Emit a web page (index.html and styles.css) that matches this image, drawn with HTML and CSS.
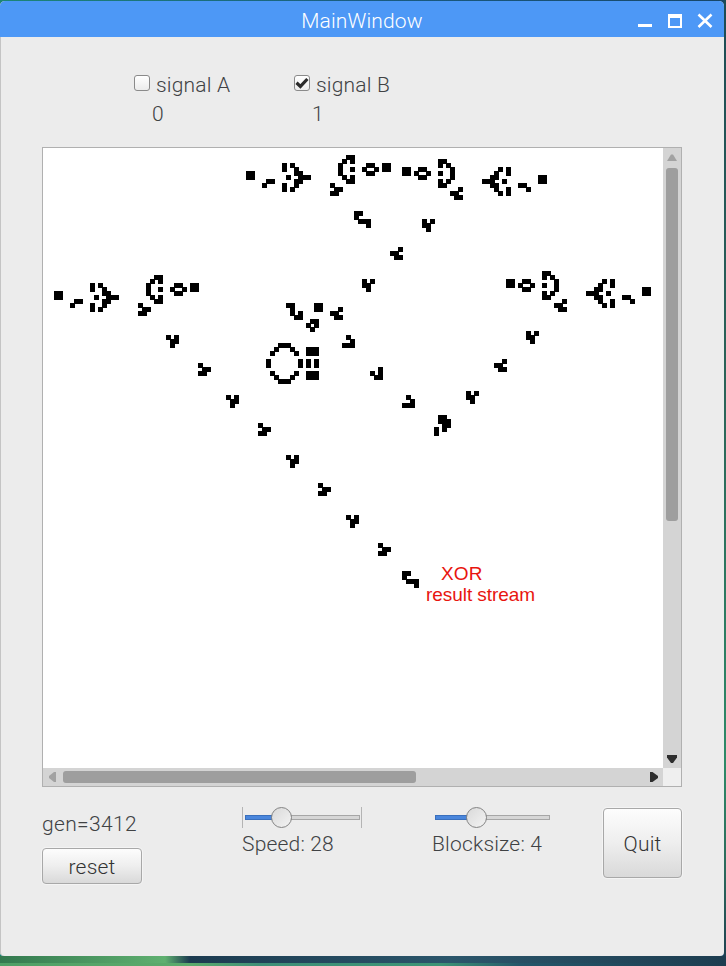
FILE: index.html
```html
<!DOCTYPE html>
<html lang="en">
<head>
<meta charset="utf-8">
<title>MainWindow</title>
<link rel="stylesheet" href="styles.css">
</head>
<body>
<main class="window">
  <header class="titlebar">
    <h1 class="title"><span class="t-title">MainWindow</span></h1>
    <div class="controls">
      <svg width="76" height="18" viewBox="0 0 76 18" fill="none" stroke="#fff">
        <path d="M0 14.500H14" stroke-width="3"/>
        <path d="M31 4V16H43V4" stroke-width="2"/>
        <path d="M30 5H44" stroke-width="4"/>
        <path d="M60.5 3.5L73.5 16M73.5 3.5L60.5 16" stroke-width="2.6"/>
      </svg>
    </div>
  </header>

  <section class="signals">
    <div class="signal">
      <label class="check"><span class="box"></span><span class="t-sig">signal A</span></label>
      <div class="value">0</div>
    </div>
    <div class="signal">
      <label class="check"><span class="box"><svg width="16" height="16" viewBox="0 0 16 16"><path d="M2.5 7.8L6.4 11.4L13.4 4" fill="none" stroke="#2b2b2b" stroke-width="3.2"/></svg></span><span class="t-sig">signal B</span></label>
      <div class="value">1</div>
    </div>
  </section>

  <section class="view">
    <div class="field">
      <svg id="cells" width="620" height="620" viewBox="1 1 620 620" shape-rendering="crispEdges"></svg>
      <div class="note"><span class="note-head">XOR</span><span>result stream</span></div>
    </div>
    <div class="vbar">
      <svg width="18" height="20" viewBox="0 0 18 20"><path d="M4 13L8 6.500H10L14 13Z" fill="#a2a2a2"/></svg>
      <div class="vthumb"></div>
      <svg class="end" width="18" height="18" viewBox="0 0 18 18"><path d="M4 5H14V7.500L10 13H8L4 7.500Z" fill="#2e2e2e"/></svg>
    </div>
    <div class="hbar">
      <svg width="20" height="18" viewBox="0 0 20 18"><path d="M13 4V14H11L6 10V8L11 4Z" fill="#a2a2a2"/></svg>
      <div class="hthumb"></div>
      <svg class="end" width="18" height="18" viewBox="0 0 18 18"><path d="M5 4H7.500L13 8V10L7.500 14H5Z" fill="#2e2e2e"/></svg>
    </div>
    <div class="corner"></div>
  </section>

  <footer class="panel">
    <div class="gen">
      <div class="t-line">gen=3412</div>
      <button class="btn reset">reset</button>
    </div>
    <div class="speed">
      <div class="slider ticks"><span class="fill"></span><span class="rail"></span><span class="knob"></span></div>
      <div class="t-line">Speed: 28</div>
    </div>
    <div class="size">
      <div class="slider"><span class="fill"></span><span class="rail"></span><span class="knob"></span></div>
      <div class="t-line">Blocksize: 4</div>
    </div>
    <button class="btn quit">Quit</button>
  </footer>
</main>
<script src="life.js"></script>
</body>
</html>
```

FILE: styles.css
```css
* { box-sizing: border-box; }

body {
  margin: 0;
  height: 966px;
  padding-top: 1px;
  overflow: hidden;
  font: 300 21px/28px Roboto, "Liberation Sans", sans-serif;
  letter-spacing: .18px;
  color: #404244;
  background:
    linear-gradient(90deg, #4f9f66 0, #5cab6c 190px, #3f8f78 260px, #3d9476 440px, #24566a 520px, #1d3d50 100%) 0 963px / 726px 3px no-repeat,
    linear-gradient(90deg, #33794f 0, #5fb070 165px, #1c3b50 190px, #2b566b 450px, #1d3d50 100%) 0 956px / 726px 10px no-repeat,
    linear-gradient(#1d4b55 0, #2b6358 40%, #2d8a68 79%, #2c6a5c 90%, #1d3d50 100%) 724px 0 / 2px 966px no-repeat,
    linear-gradient(90deg, #1c8576, #1a5c80 50%, #174668) #174668;
}

.window {
  width: 724px;
  height: 955px;
  background: #ececec;
  border-radius: 5px 5px 4px 4px;
  overflow: hidden;
  box-shadow: inset 1px 0 #c4c4c4;
}

.titlebar {
  height: 36px;
  display: grid;
  grid-template-columns: 1fr auto 1fr;
  align-items: center;
  background: #4d98f6;
}
.title {
  grid-column: 2;
  margin: 0;
  font-size: 21px;
  font-weight: 300;
  line-height: 36px;
  letter-spacing: .15px;
  color: #fff;
  padding-top: 2px;
}
.controls {
  justify-self: end;
  width: 86px;
  height: 18px;
}
.controls svg { display: block; }

.signals {
  height: 110px;
  padding: 33px 0 0 134px;
  display: flex;
}
.signal { width: 160px; }
.check { display: flex; gap: 6px; height: 29px; line-height: 30px; }
.box {
  width: 16px;
  height: 16px;
  margin-top: 5px;
  border: 1px solid #8a8a8a;
  border-radius: 3px;
  background: linear-gradient(#fff, #ececec);
}
.box svg { display: block; margin: -1px; }
.value { padding-left: 18px; line-height: 30px; }

.view {
  width: 640px;
  height: 640px;
  margin-left: 42px;
  border: 1px solid #b0b0b0;
  display: grid;
  grid-template: 620px 18px / 620px 18px;
}
.field { position: relative; background: #fff; }
.field svg, .vbar svg, .hbar svg { display: block; }
.note {
  position: absolute;
  left: 383px;
  top: 415px;
  display: flex;
  flex-direction: column;
  font: 400 19px/21px "Liberation Sans", sans-serif;
  letter-spacing: -.06px;
  color: #e8150f;
  white-space: nowrap;
}
.note-head { padding-left: 15px; letter-spacing: .2px; }
.vbar, .hbar { display: flex; background: #d4d4d4; }
.vbar { flex-direction: column; }
.vthumb { width: 12px; height: 353px; margin-left: 3px; border-radius: 3px; background: #9e9e9e; }
.hthumb { width: 353px; height: 12px; margin-top: 3px; border-radius: 3px; background: #9e9e9e; }
.vbar .end { margin-top: auto; }
.hbar .end { margin-left: auto; }
.corner { background: #efefef; }

.panel {
  margin: 20px 42px 0;
  display: grid;
  grid-template-columns: 200px 190px 171px 79px;
  align-items: start;
}
.gen { padding-top: 3px; }
.gen .t-line { height: 38px; letter-spacing: .35px; }
.t-line { white-space: nowrap; }
.btn {
  font: inherit;
  letter-spacing: .18px;
  color: #333;
  padding: 2px 0 0;
  border: 1px solid #a8a8a8;
  border-radius: 4px;
  background: linear-gradient(#fdfdfd, #eee 50%, #d9d9d9);
  box-shadow: 0 0 0 1px #f4f4f4;
}
.reset { display: block; width: 100px; height: 36px; }
.quit { width: 79px; height: 70px; margin-top: 1px; }

.slider {
  position: relative;
  width: 120px;
  height: 21px;
  margin-bottom: 2px;
  padding: 0 2px 0 3px;
  display: flex;
  align-items: center;
}
.ticks { border: solid #b4b4b4; border-width: 0 1px; padding: 0 1px 0 2px; }
.fill { width: 38px; height: 5px; background: #4a86dc; border: 1px solid #3a6fbc; }
.rail { flex: 1; height: 5px; background: #d6d6d6; border: 1px solid #a6a6a6; }
.knob {
  position: absolute;
  left: 28px;
  top: 0;
  width: 21px;
  height: 21px;
  border: 1px solid #838383;
  border-radius: 50%;
  background: linear-gradient(135deg, #d9d9d9, #f3f3f3);
}
.size .knob { left: 34px; }
```

FILE: life.js
```js
// Live patterns of the automaton; '#' is a live cell.
const shapes = {
  block: ["##", "##"],
  pairR: [".##", "#.."],
  pairL: ["##.", "..#"],
  arrowR: ["#.#....", "#..#...", "...##..", ".#..###", "...##..", "#..#...", "#.#...."],
  arrowL: ["....#.#", "...#..#", "..##...", "###..#.", "..##...", "...#..#", "....#.#"],
  bowC: ["..##", ".#.#", "#...", "#..#", "#...", ".#.#", "..##"],
  bowD: ["##..", "#.#.", "...#", "#..#", "...#", "#.#.", "##.."],
  hive: [".##.", "#..#", ".##."],
  gliderR: ["#..", ".##", "##."],
  gliderL: ["..#", "##.", ".##"],
  gliderV: ["#.#", ".##", ".#."],
  gliderW: ["#.#", "##.", ".#."],
  gliderB: [".#.", "..#", "###"],
  gliderJ: ["..#", "#.#", ".##"],
  eater: ["##..", "#...", ".###", "...#"],
  hook: ["##..", ".#..", ".#.#", "..##"],
  boat: [".##", "#.#", ".#."],
  ring: ["...###", "..#...#", ".#.....#", "", "#.......#", "#.......#", "", ".#.....#", "..#...#", "...###"],
  stack: ["###", "###", "", "#.#", "#.#", "", "###", "###"],
  blob: [".##.", ".###", "..##", "#.#.", "#..."]
};

// [shape, column, row]
const placed = [
  ["block", 51, 6], ["pairR", 55, 8], ["arrowR", 60, 4], ["bowC", 74, 2],
  ["gliderR", 72, 9], ["hive", 80, 4], ["block", 85, 4], ["eater", 78, 16],
  ["block", 90, 5], ["hive", 93, 5], ["bowD", 99, 3], ["gliderL", 102, 10],
  ["arrowL", 110, 5], ["pairL", 119, 9], ["block", 124, 7],
  ["gliderW", 95, 18], ["gliderL", 87, 25], ["gliderW", 80, 33],
  ["block", 3, 36], ["pairR", 7, 38], ["arrowR", 12, 34], ["bowC", 26, 32],
  ["gliderR", 24, 39], ["hive", 32, 34], ["block", 37, 34],
  ["hook", 61, 39], ["block", 68, 39], ["gliderL", 72, 40], ["boat", 66, 43],
  ["ring", 56, 49], ["stack", 66, 50],
  ["gliderB", 75, 47], ["gliderJ", 82, 55], ["gliderB", 90, 62], ["blob", 98, 67],
  ["block", 116, 33], ["hive", 119, 33], ["bowD", 125, 31], ["gliderL", 128, 38],
  ["arrowL", 136, 33], ["pairL", 145, 37], ["block", 150, 35],
  ["gliderW", 121, 46], ["gliderL", 113, 53], ["gliderW", 106, 61],
  ["gliderV", 31, 47], ["gliderR", 39, 54], ["gliderV", 46, 62], ["gliderR", 54, 69],
  ["gliderV", 61, 77], ["gliderR", 69, 84], ["gliderV", 76, 92], ["gliderR", 84, 99],
  ["eater", 90, 106]
];

const step = 4;
let d = "";
for (const [name, col, row] of placed) {
  shapes[name].forEach((line, r) => {
    [...line].forEach((ch, c) => {
      if (ch === "#") d += `M${(col + c) * step} ${(row + r) * step}h5v5h-5z`;
    });
  });
}
const path = document.createElementNS("http://www.w3.org/2000/svg", "path");
path.setAttribute("d", d);
document.getElementById("cells").appendChild(path);
```
